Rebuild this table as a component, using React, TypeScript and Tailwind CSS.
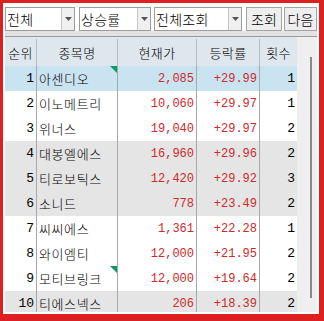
import type { ReactNode } from "react";

type Row = {
  rank: number;
  name: string;
  price: string;
  rate: string;
  count: number;
  marked?: boolean;
};

const ROWS: Row[] = [
  { rank: 1, name: "아센디오", price: "2,085", rate: "+29.99", count: 1, marked: true },
  { rank: 2, name: "이노메트리", price: "10,060", rate: "+29.97", count: 1 },
  { rank: 3, name: "위너스", price: "19,040", rate: "+29.97", count: 2 },
  { rank: 4, name: "대봉엘에스", price: "16,960", rate: "+29.96", count: 2 },
  { rank: 5, name: "티로보틱스", price: "12,420", rate: "+29.92", count: 3 },
  { rank: 6, name: "소니드", price: "778", rate: "+23.49", count: 2 },
  { rank: 7, name: "씨씨에스", price: "1,361", rate: "+22.28", count: 1 },
  { rank: 8, name: "와이엠티", price: "12,000", rate: "+21.95", count: 2 },
  { rank: 9, name: "모티브링크", price: "12,000", rate: "+19.64", count: 2, marked: true },
  { rank: 10, name: "티에스넥스", price: "206", rate: "+18.39", count: 2 },
];

const KR = { fontFamily: '"Noto Sans CJK KR", "Liberation Sans", sans-serif' };
const NUM = { fontFamily: '"Liberation Mono", "DejaVu Sans Mono", monospace' };

function Combo({ label, width }: { label: string; width: string }) {
  return (
    <div className={`flex h-[24px] border border-[#9c9c9c] bg-white ${width}`}>
      <span className="flex-1 pl-[1px] text-[14px] font-light leading-[23px] tracking-[0.3px] text-black" style={KR}>
        {label}
      </span>
      <span className="flex w-[13px] items-center justify-center border-l border-[#c8c8c8] bg-[#f0f0f0]">
        <svg width="7" height="4" viewBox="0 0 7 4">
          <path d="M0 0h7L3.5 4z" fill="#555" />
        </svg>
      </span>
    </div>
  );
}

function Btn({ children, width }: { children: ReactNode; width: string }) {
  return (
    <button
      className={`h-[24px] border border-[#a4a4a4] bg-[#eeeeee] text-[14px] font-light leading-[22px] text-black ${width}`}
      style={KR}
    >
      {children}
    </button>
  );
}

function rowBg(i: number) {
  if (i === 0) return "bg-[#c9e3f1]";
  return Math.floor(i / 3) % 2 === 1 ? "bg-[#e5e5e5]" : "bg-white";
}

export default function App() {
  return (
    <div className="h-[321px] w-[324px] bg-[#df2020] pb-[7px] pl-[3px] pr-[5px] pt-[3px]">
      <div className="flex h-full flex-col bg-white pb-[2px] pl-[2px] pr-[2px] pt-[2px]">
        {/* toolbar */}
        <div className="flex h-[26px] items-start pt-[2px]">
          <Combo label="전체" width="w-[71px]" />
          <div className="ml-[4px]">
            <Combo label="상승률" width="w-[72px]" />
          </div>
          <div className="ml-[3px]">
            <Combo label="전체조회" width="w-[88px]" />
          </div>
          <div className="ml-[4px]">
            <Btn width="w-[36px]">조회</Btn>
          </div>
          <div className="ml-[2px]">
            <Btn width="w-[33px]">다음</Btn>
          </div>
        </div>
        <div className="h-[6px] border-b border-[#9a9a9a] bg-[#e2e2e2]" />

        {/* grid */}
        <div className="flex flex-1 overflow-hidden">
          <div className="w-[292px]">
            <div
              className="grid h-[29px] grid-cols-[32px_81px_79px_63px_37px] bg-[#dfe7ee] pt-[2px] text-[13px] font-light text-black"
              style={KR}
            >
              {["순위", "종목명", "현재가", "등락률", "횟수"].map((h) => (
                <div key={h} className="flex items-center justify-center border-r border-[#b4bcc4] tracking-[0.4px] last:border-r-0">
                  {h}
                </div>
              ))}
            </div>
            {ROWS.map((r, i) => (
              <div key={r.rank} className={`grid h-[25px] grid-cols-[32px_81px_79px_63px_37px] ${rowBg(i)}`}>
                <div className="flex items-center justify-end border-r border-[#a8a8a8] pr-[2px] text-[13px] text-black" style={NUM}>
                  {r.rank}
                </div>
                <div
                  className="relative flex items-center border-r border-[#a8a8a8] pl-[2px] text-[13px] font-light tracking-[0.6px] text-black"
                  style={KR}
                >
                  {r.name}
                  {r.marked && (
                    <svg className="absolute right-0 top-0" width="7" height="7" viewBox="0 0 7 7">
                      <path d="M0 0h7v7z" fill="#0b9b5c" />
                    </svg>
                  )}
                </div>
                <div className="flex items-center justify-end border-r border-[#a8a8a8] pr-[2px] text-[12px] text-[#cf2a2a]" style={NUM}>
                  {r.price}
                </div>
                <div className="flex items-center justify-end border-r border-[#a8a8a8] pr-[2px] text-[12px] text-[#cf2a2a]" style={NUM}>
                  {r.rate}
                </div>
                <div className="flex items-center justify-end pr-[2px] text-[13px] text-black" style={NUM}>
                  {r.count}
                </div>
              </div>
            ))}
          </div>

          {/* vertical scrollbar */}
          <div className="flex w-[20px] flex-col items-end bg-[#efefef] pb-[14px] pr-[5px] pt-[20px]">
            <div className="w-[2px] flex-1 bg-[#8a8a8a]" />
          </div>
        </div>
      </div>
    </div>
  );
}
